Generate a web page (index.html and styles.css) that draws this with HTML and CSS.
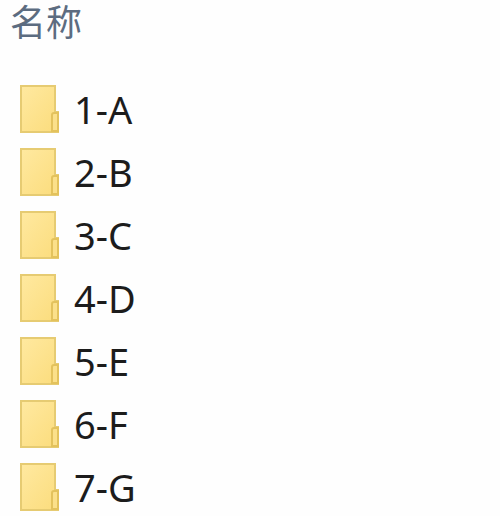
FILE: index.html
```html
<!DOCTYPE html>
<html lang="zh-CN">

<head>
    <meta charset="utf-8">
    <meta name="viewport" content="width=device-width, initial-scale=1">
    <title>名称</title>
    <link rel="stylesheet" href="styles.css">
</head>

<body>
    <svg class="sprite" aria-hidden="true">
        <defs>
            <linearGradient id="folder-fill" x1="0" y1="0" x2="1" y2="1">
                <stop offset="0" stop-color="#ffe9a0" />
                <stop offset="1" stop-color="#fbdc7c" />
            </linearGradient>
        </defs>
        <symbol id="folder" viewBox="0 0 40 48">
            <path d="M1 1H35V27H38V47H1Z" fill="url(#folder-fill)" stroke="#e6cb72" stroke-width="2" />
            <path d="M32 46V30Q32 28 34 28H38V46Z" fill="#fbe08a" stroke="#e3c25c" stroke-width="2" />
        </symbol>
    </svg>

    <main class="file-list">
        <h1 class="column-title">名称</h1>
        <ul class="folders">
            <li class="folder"><svg class="folder-icon" aria-hidden="true"><use href="#folder" /></svg><span class="folder-name">1-A</span></li>
            <li class="folder"><svg class="folder-icon" aria-hidden="true"><use href="#folder" /></svg><span class="folder-name">2-B</span></li>
            <li class="folder"><svg class="folder-icon" aria-hidden="true"><use href="#folder" /></svg><span class="folder-name">3-C</span></li>
            <li class="folder"><svg class="folder-icon" aria-hidden="true"><use href="#folder" /></svg><span class="folder-name">4-D</span></li>
            <li class="folder"><svg class="folder-icon" aria-hidden="true"><use href="#folder" /></svg><span class="folder-name">5-E</span></li>
            <li class="folder"><svg class="folder-icon" aria-hidden="true"><use href="#folder" /></svg><span class="folder-name">6-F</span></li>
            <li class="folder"><svg class="folder-icon" aria-hidden="true"><use href="#folder" /></svg><span class="folder-name">7-G</span></li>
        </ul>
    </main>
</body>

</html>
```
FILE: styles.css
```css
body {
    margin: 0;
    background-color: #fefefe;
    color: #1c1c1c;
    font-family: "Noto Sans", "Noto Sans CJK SC", sans-serif;
}

.sprite {
    position: absolute;
    width: 0;
    height: 0;
}

.column-title {
    margin: 0;
    padding: 0 10px;
    color: #5c6c80;
    font-family: "Noto Sans CJK SC", sans-serif;
    font-size: 36px;
    font-weight: 400;
    line-height: 40px;
}

.folders {
    display: flex;
    flex-direction: column;
    gap: 15px;
    margin: 0;
    padding: 45px 20px 0;
    list-style: none;
}

.folder {
    display: flex;
    align-items: center;
    gap: 14px;
}

.folder-icon {
    flex: none;
    width: 40px;
    height: 48px;
}

.folder-name {
    font-size: 38px;
    line-height: 48px;
}
```
